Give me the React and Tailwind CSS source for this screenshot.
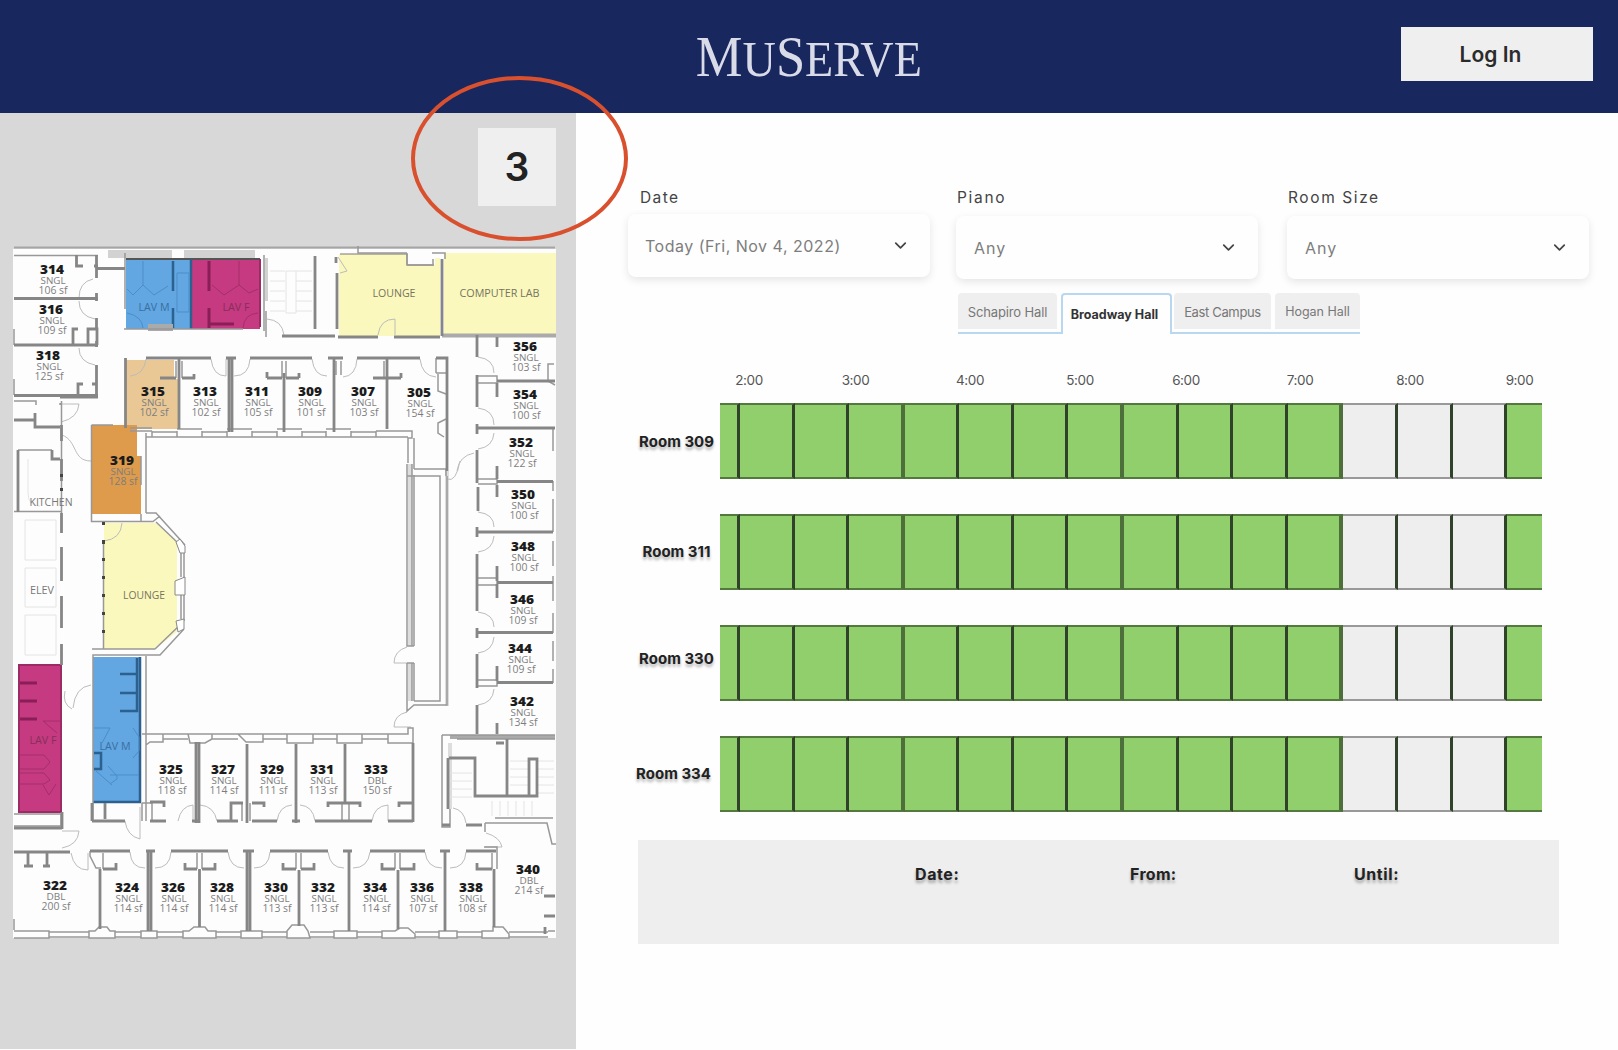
import React from "react";
import { ChevronDown } from "lucide-react";

const ROOMS = [
  ["314", 52, 269, "SNGL", 106], ["316", 51, 309, "SNGL", 109], ["318", 48, 355, "SNGL", 125],
  ["315", 153, 391, "SNGL", 102], ["313", 205, 391, "SNGL", 102], ["311", 257, 391, "SNGL", 105],
  ["309", 310, 391, "SNGL", 101], ["307", 363, 391, "SNGL", 103], ["305", 419, 392, "SNGL", 154],
  ["319", 122, 460, "SNGL", 128], ["356", 525, 346, "SNGL", 103], ["354", 525, 394, "SNGL", 100],
  ["352", 521, 442, "SNGL", 122], ["350", 523, 494, "SNGL", 100], ["348", 523, 546, "SNGL", 100],
  ["346", 522, 599, "SNGL", 109], ["344", 520, 648, "SNGL", 109], ["342", 522, 701, "SNGL", 134],
  ["325", 171, 769, "SNGL", 118], ["327", 223, 769, "SNGL", 114], ["329", 272, 769, "SNGL", 111],
  ["331", 322, 769, "SNGL", 113], ["333", 376, 769, "DBL", 150], ["322", 55, 885, "DBL", 200],
  ["324", 127, 887, "SNGL", 114], ["326", 173, 887, "SNGL", 114], ["328", 222, 887, "SNGL", 114],
  ["330", 276, 887, "SNGL", 113], ["332", 323, 887, "SNGL", 113], ["334", 375, 887, "SNGL", 114],
  ["336", 422, 887, "SNGL", 107], ["338", 471, 887, "SNGL", 108], ["340", 528, 869, "DBL", 214],
];

const THICK = [
  // north-west rooms
  "M14 297.500H98M96.500 254V277M96.500 292V300M14 344H98M96.500 317V327M96.500 340V346M14 394.500H98M96.500 364V395M60 396H98",
  "M76.500 254V265H83M94 265h4M73 344V328H78M88 344V328H97V344M78 394V383H83M92 383h5",
  "M97 267.500H125M14 419H35M35 412V426H60M52 449V458H60",
  // inner corridor, north side
  "M146 357H211M226 357H236M250 357H312M328 357H343M357 357H420M436 357H447V470",
  "M125.500 357V427M179 357V428M229 357V431M232 357V431M284 372V431M334 357V431M387 357V428",
  "M160 377H176M182 377H195M194 373v5M267 377H282M267 371v6M286 377H299M299 372v5M373 377H401M401 372v5",
  // east rooms
  "M477 334V356M477 374V406M477 423V433M477 449V482M477 553V610M477 653V687M477 704V733M478 486V510M477 526V536M477 627V637",
  "M497 380H555M477 427H555M497 480.500H553M477 531H553M497 581.500H553M477 631.500H553M497 681.500H553",
  "M497 336V346M497 382V396M497 465V478M497 484V496M497 565V580M497 583V597M497 665V680M497 722V733",
  // south corridor rooms, upper row
  "M196 741V822M199 741V822M247 743V822M296 743V822M345 743V802M413 742V821",
  "M150 820H166M150 801H164V806M192 820h8M217 820H238M231 820V802H243M252 802H264V806M252 820H277M292 820h8M315 820H372M328 806V802H360V806M388 820H413M399 806V802H412",
  // lower row
  "M90 850H130M146 850H155M171 850H228M243 850H254M270 850H328M343 850H352M370 850H425M440 850H450M466 850H496",
  "M100 868V928M148 850V930M151 850V930M199.500 868V926M247 850V930M250 850V930M299 869V925M349 850V930M398 869V928M445 850V930M494 868V926",
  "M103 868H116V862M185 862V868H197M202 868H215V862M283 862V868H296M301 868H314V862M382 862V868H395M400 868H414V862M477 862V868H492",
  "M28 852V865M24 865H33M47 852V865M43 865H50M14 851H70M14 827H62M62 811V828",
  // elevator bank
  "M61.500 512V532M61.500 546V580M61.500 595V627M61.500 643V664M61.500 424V440M61.500 458V480M18 449V511",
  // walls round the stairs
  "M448 757V808M449 757H475V795H537V758H529V795M507 738V795M496 742h8M482 824H466M442 824h8M315 255V328M282 335H335",
  "M336 256V262M337 272V328M338 336H378M394 336H440M442 258V335M92 820H125M92 802V820M105 802V818",
  "M544 895h11M544 915h11M545 926v7",
].join("");

const THIN = [
  "M14 254.500H98M14 328V344M14 378V394M14 400H36V404M60 404V402M61.500 400V512M18 449H52M14 510.500H62M125 252V308M124 328H243",
  "M91.500 424H113M91.500 424V520.500H153L160 515M141 513V520M146 432V512M146 436H408M146 512H156L185 544M184 552V578M184 594V620M184 628L160 654H93V820M146 655V733",
  "M103.500 540V648M92 648H155M155 648L181 623M156 521L178 542M181 552V576M181 594V618",
  "M130 427H152M152 430V436M177 430V436M202 430V436M227 430V436M252 430V436M277 430V436M302 430V436M326 430V436M351 430V436M376 430V436",
  "M152 431H177M202 431H227M252 431H277M302 431H326M351 431H376M130 430H152M177 428H202M227 428H252M277 428H302M326 428H351M376 430H412V437H408V462M414 437V468M414 468H446V475",
  "M407 463V645H414M407 662H414M407 662V710L414 704H447V475M407 475H440V700H414M414 474V645M414 662V700M412 463V645M412 662V700M440 475H407",
  "M436 372H446M438 373V390L446 393M446 418L438 422V432L444 436M436 357V372",
  "M146 733V820M142 733H163V741H150L146 744M163 733H188M188 733H212V738L205 742H190ZM212 733H238M238 733H263V741H246ZM263 733H287M287 733H313V742H287ZM313 733H337M337 733H362V742H337ZM362 733H388M388 733H408V727H413V742H388Z",
  "M163 738H188M212 738H238M263 738H287M313 738H337M362 738H388M142 802H152M142 802V820M152 802V820",
  "M14 929V918M49 931H89M49 936H89M115 931H141M115 936H141M157 931H183M157 936H183M216 931H241M216 936H241M262 931H287M262 936H287M310 931H334M310 936H334M357 931H382M357 936H382M415 931H439M415 936H439M457 931H482M457 936H482M509 931H548M509 936H548",
  "M14 930H49V937H14M89 930H95L99 926H107L110 930H115V937H89ZM141 930H157V937H141ZM183 930H189L194 926H205L208 930H216V937H183ZM241 930H262V937H241ZM287 930L292 924H304L308 930L310 937H287ZM334 930H357V937H334ZM382 930H395L400 927H408L415 933V937H382ZM439 930H457V937H439ZM482 930H493V926H503L509 933V937H482ZM548 930H555",
  "M14 813H61V825H14M442 734V826H450V808M457 738H555M442 734H555M495 817H553M485 822H547L552 843H556M485 822V831M484 846H497V868",
  "M554 363H548V380L555 384",
  "M478 375H497V382H478M478 478H497V483H478M478 577H497V584H478M478 679H497V685H478M553 427V450M553 480V490M553 498V531M553 540V565M553 575V600M553 612V632M553 640V660M553 668V682",
  "M90 850V855L96 867H101M103 852V868M197 852V868M202 852V868M296 852V868M301 852V868M395 852V868M400 852V868M492 852V868M231 802V820M242 802V820M250 802V820M342 802V820M349 802V820M176 360V377M182 360V377M282 360V377M286 360V377M336 360V374M341 360V374M384 360V377",
  "M358 245V252H407M407 252V264H433V258M445 258V252H432M264 254V330M266 310V336M141 455V484M146 462V490M146 679V708",
].join("");

const DOORS = [
  "M93 278Q79 281 79 297M79 300Q79 315 95 318M79 347Q79 361 95 364M60 403H79Q78 417 61 421M62 434C78 440 72 460 91 460",
  "M211 358Q213 375 226 375V358M250 358Q249 375 234 375M312 358Q314 375 327 375M357 358Q356 375 343 376M420 358Q422 375 436 376M146 358Q144 374 130 375",
  "M478 356Q494 358 494 372M478 407Q494 409 494 424M494 432Q493 446 478 448M457 470Q459 455 474 452M447 478Q456 482 460 460M478 511Q494 513 494 526M494 535Q493 549 478 551M478 611Q494 613 494 626M494 636Q493 650 478 652M494 688Q493 702 478 704",
  "M407 646Q394 650 394 662H407M407 711Q394 714 394 726H411M178 820Q181 805 193 804V820M200 804Q214 805 217 820M277 820Q279 805 292 804M300 804Q313 805 315 820M372 820Q374 805 388 804V820",
  "M130 851Q131 867 145 867M171 851Q170 867 155 867M228 851Q230 867 244 867M270 851Q269 867 254 867M328 851Q330 867 344 867M370 851Q368 867 353 867M425 851Q427 867 442 867M466 851Q465 867 450 867M71 852Q74 869 88 869V852",
  "M125 820Q127 835 140 838V806M62 830H79Q78 844 62 847M453 807Q464 809 466 822M486 832Q500 836 502 846H485M72 708Q62 703 65 690M73 707Q75 686 91 684M104 540Q121 538 122 522M378 334Q380 318 395 318V334M267 318Q282 319 284 334M338 256L347 270L340 272",
].join("");

const STAIRS = [
  "M270 270H285M270 280H285M270 290H285M270 300H285M270 310H285M296 270H312M296 280H312M296 290H312M296 300H312M296 310H312M286 270H296V312H286Z",
  "M450 772H472M450 780H472M450 788H472M450 796H472M510 760H528M510 768H528M510 776H528M510 784H528M538 760H554M538 768H554M538 776H554M538 784H554M538 792H554M492 800V815M500 800V815M508 800V815M516 800V815M524 800V815M532 800V815",
  "M25 519H56V559H25ZM25 567H56V606H25ZM25 614H56V654H25ZM28 458V492Q28 505 40 505",
].join("");

function RoomLabel({ room }) {
  const [name, x, y, kind, size] = room;
  return (
    <g textAnchor="middle">
      <text x={x} y={y + 4} fontSize="11.500" fontWeight="800" fill="#1c1c1c" textLength="24" lengthAdjust="spacingAndGlyphs">{name}</text>
      <text x={x + 1} y={y + 14} fontSize="9" fill="#7d7d7d" textLength={kind === "DBL" ? 19 : 25} lengthAdjust="spacingAndGlyphs">{kind}</text>
      <text x={x + 1} y={y + 24} fontSize="10" fill="#7d7d7d" textLength="29" lengthAdjust="spacingAndGlyphs">{size} sf</text>
    </g>
  );
}

function FloorPlan() {
  return (
    <svg className="block h-[694px] w-[544px]" viewBox="13 245 544 694" fontFamily="'Open Sans', sans-serif" fill="none">
      <path d="M13 248H556V937H13Z" fill="#fdfdfd" />
      <path d="M108 249H172V257H108ZM184 249H255V257H184ZM265 257H268V300H265Z" fill="#d2d2d2" />
      <path d="M14 246.500H555" stroke="#a5a5a5" strokeWidth="2" />
      {/* lavatories */}
      <path d="M126 258H191V328H126ZM93 656H140V801H93Z" fill="#62a6e2" />
      <path d="M191 258H260V328H191ZM19 664H61V811H19Z" fill="#c53a80" />
      <path d="M126 258H260" stroke="#555" strokeWidth="2" />
      <path d="M173 260V290M173 307V327M191 258V328M140 656V801H93M120 673H137V657M120 692H137V710H120M137 673V692M94 752H101V768H94" stroke="#2c608f" strokeWidth="2.500" />
      <path d="M143 260V284L154 294L168 285M143 284L133 294L127 288M127 312Q142 315 143 327M177 272H189V311H177ZM94 727H110L102 742M108 765L117 775V778L110 783M110 774H139M96 770L112 784M133 727L139 736V750L133 757" stroke="#4d8dc6" />
      <path d="M209 260V290M209 307V327M209 323H234M20 682H37M20 700H37M20 718H37" stroke="#8a1f57" strokeWidth="3" />
      <path d="M260 258V326M19 664H61V811H19Z" stroke="#9b2a65" strokeWidth="2" />
      <path d="M239 260V284L249 292L258 288M239 284L224 294L212 284M243 327Q244 313 258 312M61 720H43L57 732M20 754H44L50 761L44 768H20M20 772H44L50 779L44 783H20M56 783L49 794L43 784" stroke="#a32f6b" />
      <path d="M148 323H173V330H148Z" fill="#aaa" />
      {/* rooms that can be picked */}
      <path d="M126 359H174V378H178V428H126Z" fill="#e9c896" />
      <path d="M92 424H137V455H141V513H92Z" fill="#de9b4c" />
      {/* lounges and lab */}
      <path d="M339 253H407V264H435V257H440V335H339Z" fill="#fbf8bd" />
      <path d="M444 252H556V333H444Z" fill="#fbf8bd" />
      <path d="M104 522H156L177 541V631L155 648H104Z" fill="#fbf8bd" />
      <path d="M340 253H407V264H434" stroke="#777" />
      <path d="M442 334.500H556M450 736H555" stroke="#aaa" strokeWidth="4" />
      <path d="M447 470V705M410 463V645M410 662V700M450 742V808" stroke="#ddd" strokeWidth="4" />
      <path d={STAIRS} stroke="#e4e4e4" />
      <path d={DOORS} stroke="#bcbcbc" />
      <path d={THIN} stroke="#989898" strokeWidth="1.500" />
      <path d={THICK} stroke="#868686" strokeWidth="2.800" />
      <path d="M176 541L180 538L185 545V552L180 552ZM175 580L185 576V594H175ZM176 620L184 618V628L178 631Z" fill="#fff" stroke="#888" />
      <path d="M103.500 521v3M103.500 539v4M103.500 557v3M103.500 575v3M103.500 593v3M103.500 611v3M103.500 629v3M61.500 473v3M61.500 487v3" stroke="#444" strokeWidth="3" />
      {ROOMS.map((r) => <RoomLabel key={r[0]} room={r} />)}
      <g fontSize="11" textAnchor="middle">
        <text x="154" y="310" fill="#396f9f" textLength="31" lengthAdjust="spacingAndGlyphs">LAV M</text>
        <text x="236" y="310" fill="#84305c" textLength="27" lengthAdjust="spacingAndGlyphs">LAV F</text>
        <text x="43" y="743" fill="#84305c" textLength="27" lengthAdjust="spacingAndGlyphs">LAV F</text>
        <text x="115" y="749" fill="#396f9f" textLength="31" lengthAdjust="spacingAndGlyphs">LAV M</text>
        <g fill="#75745e">
          <text x="394" y="296" textLength="43" lengthAdjust="spacingAndGlyphs">LOUNGE</text>
          <text x="499.500" y="296" textLength="80" lengthAdjust="spacingAndGlyphs">COMPUTER LAB</text>
          <text x="144" y="598" textLength="42" lengthAdjust="spacingAndGlyphs">LOUNGE</text>
        </g>
        <text x="51" y="505" fill="#777" textLength="43" lengthAdjust="spacingAndGlyphs">KITCHEN</text>
        <text x="42" y="593" fill="#777" textLength="24" lengthAdjust="spacingAndGlyphs">ELEV</text>
      </g>
    </svg>
  );
}

function Field({ label, value, indent, lift, spread }) {
  return (
    <div className="w-[302px]">
      <div className={`h-[19px] text-[15.5px] leading-[19px] text-[#444] ${indent}`}>{label}</div>
      <div className={`flex h-[63px] items-center justify-between rounded-lg bg-[#fefefe] pl-[17px] pr-[20px] shadow-[0_3px_9px_rgba(0,0,0,0.1)] ${lift ? "mt-[6px]" : "mt-[9px]"}`}>
        <span className={`text-[16px] text-[#7d7d7d] ${spread}`}>{value}</span>
        <ChevronDown className="size-[19px] text-[#444]" strokeWidth={2.2} />
      </div>
    </div>
  );
}

const SLOTS = Array.from({ length: 16 }, (_, i) => i);

function Timeline({ room, labelShift }) {
  return (
    <div className="flex h-[76px]">
      <div className={`w-[84px] text-center text-[15px] font-bold leading-[20px] text-[#222] [text-shadow:0_3px_3px_rgba(0,0,0,0.3)] ${labelShift}`}>
        Room {room}
      </div>
      <div className="flex w-[822px]">
        {SLOTS.map((i) => {
          const taken = i >= 12 && i <= 14;
          const width = i === 0 ? "w-[20px]" : i === 15 ? "w-[35px]" : "flex-1";
          const edge = i === 15 ? "" : i % 4 === 3 ? "border-r-[4px] border-r-[#4d703b]" : "border-r-[3px] border-r-[#30422a]";
          const fill = taken ? "border-y-[#999999] bg-[#eeeeee]" : "border-y-[#54793f] bg-[#90cf6c]";
          return <div key={i} className={`border-y-2 ${width} ${edge} ${fill}`} />;
        })}
      </div>
    </div>
  );
}

const HOURS = [
  ["2:00", "w-[60px]"], ["3:00", "w-[153px]"], ["4:00", "w-[76px]"], ["5:00", "w-[144px]"],
  ["6:00", "w-[68px]"], ["7:00", "w-[160px]"], ["8:00", "w-[60px]"], ["9:00", "w-[159px]"],
];

export default function App() {
  return (
    <div className="relative flex h-[1050px] w-[1618px] flex-col overflow-hidden bg-[#fefefe] font-['Inter',sans-serif]">
      <header className="grid h-[113px] shrink-0 grid-cols-3 items-center bg-[#19275f]">
        <div />
        <h1 className="flex justify-center whitespace-nowrap pt-[3px] font-['Liberation_Serif',serif] text-[51px] leading-[60px] text-[#d9dce8]">
          <span className="inline-block scale-x-[0.905]">
            <span className="text-[58px]">M</span>U<span className="text-[58px]">S</span>ERVE
          </span>
        </h1>
        <button className="mr-[25px] mt-[-6px] h-[54px] w-[192px] justify-self-end bg-[#efefef] pr-[13px] pt-[2px] text-[21px] font-semibold text-[#2b2b2b]">
          Log In
        </button>
      </header>

      <div className="flex min-h-0 flex-1">
        <aside className="flex h-[936px] w-[576px] shrink-0 flex-col bg-[#d8d8d8]">
          <div className="ml-[478px] mt-[15px] flex h-[78px] w-[78px] items-center justify-center bg-[#efefef] text-[39px] font-semibold text-[#222]">
            3
          </div>
          <div className="ml-[13px] mt-[40px]">
            <FloorPlan />
          </div>
        </aside>

        <main className="flex-1">
          <div className="ml-[52px] mt-[75px] flex">
            <Field label="Date" value="Today (Fri, Nov 4, 2022)" indent="mb-[7px] pl-[12px] tracking-[1.4px]" lift spread="tracking-[0.5px]" />
            <div className="w-[26px]" />
            <Field label="Piano" value="Any" indent="pl-[1px] tracking-[1.7px]" spread="pl-[1px] tracking-[1px]" />
            <div className="w-[29px]" />
            <Field label="Room Size" value="Any" indent="pl-[1px] tracking-[1.6px]" spread="pl-[1px] tracking-[1px]" />
          </div>

          <div className="ml-[382px] mt-[14px] flex h-[41px] text-[13px] text-[#777]">
            <div className="w-[103px] border-b-2 border-[#b9d7ee]">
              <div className="flex h-[36px] w-[99px] items-center justify-center rounded-t bg-[#efefef] pt-[3px] tracking-[-0.15px]">Schapiro Hall</div>
            </div>
            <div className="flex w-[111px] items-center justify-center rounded-t border-x-2 border-t-2 border-[#b9d7ee] pr-[4px] pt-[2px] text-[12.5px] font-bold text-[#333]">
              Broadway Hall
            </div>
            <div className="flex w-[188px] gap-1 border-b-2 border-[#b9d7ee] pl-[2px]">
              <div className="flex h-[36px] w-[97px] items-center justify-center rounded-t bg-[#efefef] pt-[3px] tracking-[-0.35px]">East Campus</div>
              <div className="flex h-[36px] w-[85px] items-center justify-center rounded-t bg-[#efefef] pt-[3px] text-[12.5px]">Hogan Hall</div>
            </div>
          </div>

          <div className="ml-[143px] mt-[36px] flex h-[20px] text-center text-[13.5px] leading-[20px] tracking-[-0.4px] text-[#555]">
            {HOURS.map(([hour, width]) => (
              <div key={hour} className={width}>{hour}</div>
            ))}
          </div>

          <div className="ml-[60px] mt-[13px] flex flex-col gap-[35px]">
            <Timeline room="309" labelShift="pr-[3px] pt-[29px]" />
            <Timeline room="311" labelShift="pr-[3px] pt-[28px]" />
            <Timeline room="330" labelShift="pr-[3px] pt-[24px]" />
            <Timeline room="334" labelShift="pr-[9px] pt-[28px]" />
          </div>

          <div className="ml-[62px] mt-[28px] flex h-[104px] w-[921px] bg-[#eeeeee] pt-[24px] text-[16px] font-bold leading-[20px] text-[#222] [text-shadow:0_3px_3px_rgba(0,0,0,0.3)]">
            <div className="ml-[277px] w-[215px] tracking-[0.6px]">Date:</div>
            <div className="w-[224px] tracking-[0.3px]">From:</div>
            <div className="tracking-[0.6px]">Until:</div>
          </div>
        </main>
      </div>

      {/* hand-drawn ring round the floor picker */}
      <div className="absolute left-[411px] top-[76px] h-[165px] w-[217px] rounded-[50%] border-4 border-[#d9502f]" />
    </div>
  );
}
